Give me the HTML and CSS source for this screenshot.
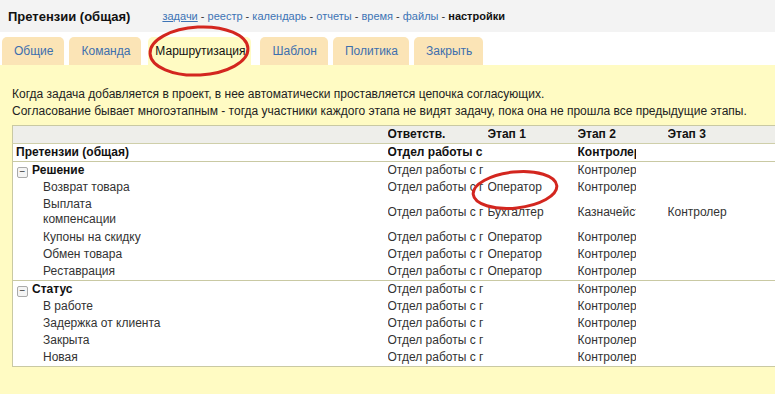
FILE: index.html
```html
<!DOCTYPE html>
<html>
  <head>
    <title>Претензии (общая) - настройки</title>
    <link rel="stylesheet" href="styles.css">
  </head>
  <body>
    <div class="page">
      <div class="top-bar">
        <span class="project-title">Претензии (общая)</span>
        <span class="nav">
          <a href="#" class="nav-link current">задачи</a> -
          <a href="#" class="nav-link">реестр</a> -
          <a href="#" class="nav-link">календарь</a> -
          <a href="#" class="nav-link">отчеты</a> -
          <a href="#" class="nav-link">время</a> -
          <a href="#" class="nav-link">файлы</a> -
          <b>настройки</b>
        </span>
      </div>

      <div class="tabs">
        <a href="#" class="tab">Общие</a>
        <a href="#" class="tab">Команда</a>
        <a href="#" class="tab active">Маршрутизация</a>
        <a href="#" class="tab">Шаблон</a>
        <a href="#" class="tab">Политика</a>
        <a href="#" class="tab">Закрыть</a>
      </div>

      <div class="panel">
        <p class="hint">
          Когда задача добавляется в проект, в нее автоматически проставляется цепочка согласующих.<br>
          Согласование бывает многоэтапным - тогда участники каждого этапа не видят задачу, пока она не прошла все предыдущие этапы.
        </p>

        <table class="routes">
          <colgroup>
            <col class="col-name">
            <col class="col-resp">
            <col class="col-stage">
            <col class="col-stage">
            <col class="col-last">
          </colgroup>
          <thead>
            <tr>
              <th></th>
              <th><span class="cell w-resp">Ответств.</span></th>
              <th><span class="cell w-stage">Этап 1</span></th>
              <th><span class="cell w-stage">Этап 2</span></th>
              <th><span class="cell w-last">Этап 3</span></th>
            </tr>
          </thead>
          <tbody>
            <tr class="project-row">
              <td>Претензии (общая)</td>
              <td><span class="cell w-resp">Отдел работы с</span></td>
              <td></td>
              <td><span class="cell w-stage">Контролер</span></td>
              <td></td>
            </tr>
          </tbody>
          <tbody class="group">
            <tr class="group-row">
              <td><span class="toggle">−</span>Решение</td>
              <td><span class="cell w-resp">Отдел работы с г</span></td>
              <td></td>
              <td><span class="cell w-stage">Контролер</span></td>
              <td></td>
            </tr>
            <tr>
              <td class="item">Возврат товара</td>
              <td><span class="cell w-resp">Отдел работы с г</span></td>
              <td><span class="cell w-stage">Оператор</span></td>
              <td><span class="cell w-stage">Контролер</span></td>
              <td></td>
            </tr>
            <tr class="tall">
              <td class="item">Выплата<br>компенсации</td>
              <td><span class="cell w-resp">Отдел работы с г</span></td>
              <td><span class="cell w-stage">Бухгалтер</span></td>
              <td><span class="cell w-stage">Казначейство</span></td>
              <td><span class="cell w-last">Контролер</span></td>
            </tr>
            <tr>
              <td class="item">Купоны на скидку</td>
              <td><span class="cell w-resp">Отдел работы с г</span></td>
              <td><span class="cell w-stage">Оператор</span></td>
              <td><span class="cell w-stage">Контролер</span></td>
              <td></td>
            </tr>
            <tr>
              <td class="item">Обмен товара</td>
              <td><span class="cell w-resp">Отдел работы с г</span></td>
              <td><span class="cell w-stage">Оператор</span></td>
              <td><span class="cell w-stage">Контролер</span></td>
              <td></td>
            </tr>
            <tr>
              <td class="item">Реставрация</td>
              <td><span class="cell w-resp">Отдел работы с г</span></td>
              <td><span class="cell w-stage">Оператор</span></td>
              <td><span class="cell w-stage">Контролер</span></td>
              <td></td>
            </tr>
          </tbody>
          <tbody class="group">
            <tr class="group-row">
              <td><span class="toggle">−</span>Статус</td>
              <td><span class="cell w-resp">Отдел работы с г</span></td>
              <td></td>
              <td><span class="cell w-stage">Контролер</span></td>
              <td></td>
            </tr>
            <tr>
              <td class="item">В работе</td>
              <td><span class="cell w-resp">Отдел работы с г</span></td>
              <td></td>
              <td><span class="cell w-stage">Контролер</span></td>
              <td></td>
            </tr>
            <tr>
              <td class="item">Задержка от клиента</td>
              <td><span class="cell w-resp">Отдел работы с г</span></td>
              <td></td>
              <td><span class="cell w-stage">Контролер</span></td>
              <td></td>
            </tr>
            <tr>
              <td class="item">Закрыта</td>
              <td><span class="cell w-resp">Отдел работы с г</span></td>
              <td></td>
              <td><span class="cell w-stage">Контролер</span></td>
              <td></td>
            </tr>
            <tr>
              <td class="item">Новая</td>
              <td><span class="cell w-resp">Отдел работы с г</span></td>
              <td></td>
              <td><span class="cell w-stage">Контролер</span></td>
              <td></td>
            </tr>
          </tbody>
        </table>
      </div>

      <!-- red hand-drawn marks over the screenshot -->
      <svg class="marks" width="775" height="394" viewBox="0 0 775 394">
        <ellipse cx="199" cy="51" rx="49" ry="24" transform="rotate(-3 199 51)" />
        <ellipse cx="515" cy="190" rx="42" ry="18" transform="rotate(-6 515 190)" />
      </svg>
    </div>
  </body>
</html>
```

FILE: styles.css
```css
html,
body {
  height: 100%;
}

body {
  margin: 0;
  font-family: "Liberation Sans", Arial, sans-serif;
  font-size: 12px;
  color: #222;
  background-color: #fff;
  overflow: hidden;
}

.page {
  position: relative;
  display: flex;
  flex-direction: column;
  height: 100%;
}

.top-bar {
  display: flex;
  align-items: center;
  gap: 32px;
  height: 32px;
  padding-left: 8px;
  background-color: #f3f3f3;
}

.project-title {
  font-size: 13px;
  font-weight: bold;
  color: #111;
}

.nav {
  font-size: 11px;
  color: #333;
}

.nav b {
  color: #111;
}

.nav-link {
  color: #3d73b5;
  text-decoration: none;
}

.nav-link.current {
  text-decoration: underline;
}

.tabs {
  display: flex;
  gap: 5px;
  padding: 5px 0 0 2px;
}

.tab {
  display: flex;
  align-items: center;
  height: 28px;
  padding: 0 11px 0 12px;
  background-color: #fbe4b6;
  border-radius: 5px 5px 0 0;
  color: #3d6fae;
  text-decoration: none;
}

.tab.active {
  padding: 0 6px 0 7px;
  margin: 0 4px 0 2px;
  background-color: #fffbc3;
  color: #111;
}

.panel {
  flex: 1;
  padding: 21px 0 0 12px;
  background-color: #fffbc3;
}

.hint {
  margin: 0 0 5px;
  line-height: 17px;
  color: #222;
  white-space: nowrap;
}

.routes {
  width: 820px;
  table-layout: fixed;
  border-collapse: collapse;
  border: 1px solid #c9c9a3;
  background-color: #fff;
  color: #333;
}

.col-name {
  width: 372px;
}

.col-resp {
  width: 100px;
}

.col-stage {
  width: 90px;
}

th,
td {
  padding: 1px 0 1px 3px;
  line-height: 15px;
  text-align: left;
  vertical-align: middle;
  white-space: nowrap;
}

th {
  background-color: #eeeeea;
  font-weight: bold;
  color: #111;
}

thead tr {
  border-bottom: 1px solid #cfcfaa;
}

.cell {
  display: block;
  overflow: hidden;
}

.w-resp {
  width: 96px;
}

.w-stage {
  width: 58px;
}

.w-last {
  width: 80px;
}

.project-row td {
  font-weight: bold;
  color: #111;
}

.project-row,
.group {
  border-bottom: 1px solid #c9c9a3;
}

.group-row td:first-child {
  font-weight: bold;
  color: #111;
  padding-left: 4px;
}

.toggle {
  display: inline-block;
  width: 9px;
  height: 9px;
  margin-right: 4px;
  border: 1px solid #aaa;
  border-radius: 2px;
  background-color: #f4f4f4;
  font-size: 10px;
  line-height: 8px;
  text-align: center;
  font-weight: normal;
  color: #333;
  vertical-align: -1px;
}

.item {
  padding-left: 30px;
}

.tall td {
  padding-top: 1px;
  padding-bottom: 2px;
}

.marks {
  position: absolute;
  top: 0;
  left: 0;
  pointer-events: none;
}

.marks ellipse {
  fill: none;
  stroke: #d3261f;
  stroke-width: 3;
}
```
